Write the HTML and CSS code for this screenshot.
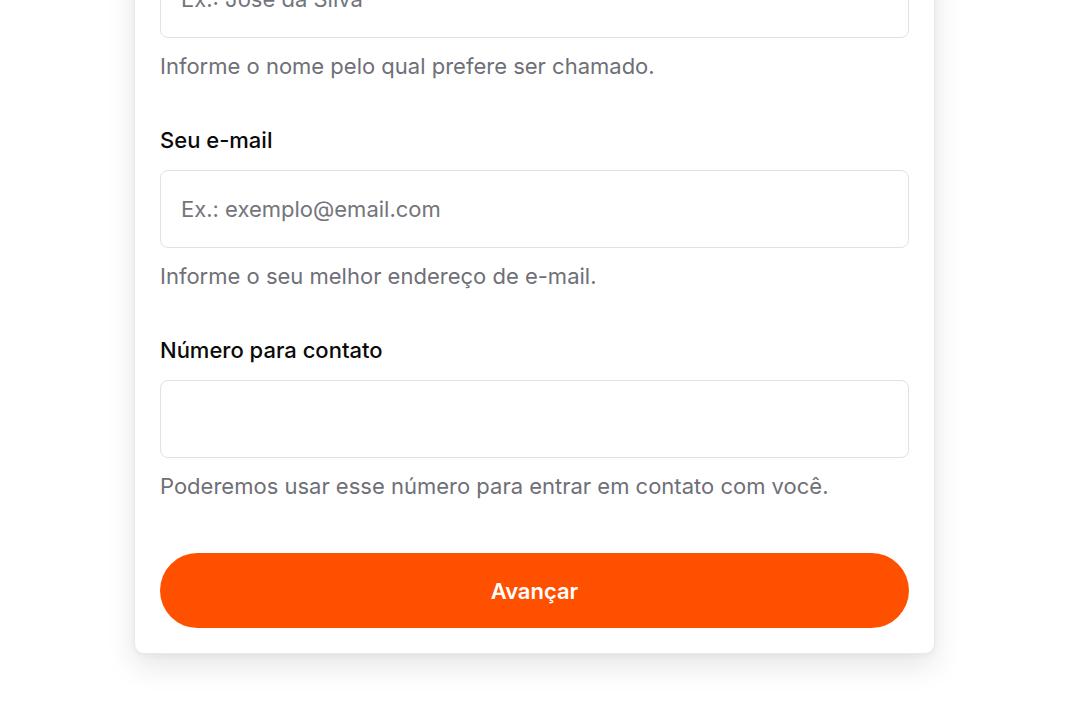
FILE: index.html
```html
<!DOCTYPE html>
<html lang="pt-BR">
<head>
<meta charset="utf-8">
<title>Cadastro</title>
<link rel="stylesheet" href="styles.css">
</head>
<body>
<main class="page">
  <form class="card">
    <div class="field">
      <label class="label" for="nome">Como quer ser chamado?</label>
      <input class="input" id="nome" type="text" placeholder="Ex.: José da Silva">
      <p class="hint">Informe o nome pelo qual prefere ser chamado.</p>
    </div>
    <div class="field">
      <label class="label" for="email">Seu e-mail</label>
      <input class="input" id="email" type="email" placeholder="Ex.: exemplo@email.com">
      <p class="hint">Informe o seu melhor endereço de e-mail.</p>
    </div>
    <div class="field">
      <label class="label" for="tel">Número para contato</label>
      <input class="input" id="tel" type="tel">
      <p class="hint">Poderemos usar esse número para entrar em contato com você.</p>
    </div>
    <button class="btn" type="button">Avançar</button>
  </form>
</main>
</body>
</html>
```
FILE: styles.css
```css
* { box-sizing: border-box; }
html, body { margin: 0; padding: 0; background: #ffffff; }
body {
  font-family: Inter, "Noto Sans", "Liberation Sans", sans-serif;
  height: 715px;
  overflow: hidden;
}
.page {
  display: flex;
  padding: 0 0 60px 134px;
  transform: translateY(-109px);
}
.card {
  width: 801px;
  background: #fff;
  border: 1px solid #e9e9e9;
  border-radius: 10px;
  box-shadow: 0 12px 30px rgba(0, 0, 0, 0.1), 0 2px 6px rgba(0, 0, 0, 0.04);
  padding: 24px 25px 25px;
  display: flex;
  flex-direction: column;
  gap: 46px;
}
.field {
  display: flex;
  flex-direction: column;
}
.label {
  font-size: 22px;
  line-height: 28px;
  font-weight: 500;
  color: #0a0a0a;
  margin-bottom: 16px;
}
.input {
  height: 78px;
  border: 1px solid #e2e2e2;
  border-radius: 8px;
  padding: 0 20px;
  font-family: inherit;
  font-size: 22px;
  color: #111;
  background: #fff;
  outline: none;
}
.input::placeholder { color: #74747c; }
.hint {
  margin: 14px 0 0;
  font-size: 22px;
  line-height: 28px;
  color: #6f6f78;
}
.btn {
  margin-top: 7px;
  height: 75px;
  border: none;
  border-radius: 38px;
  background: #ff5000;
  color: #fff;
  font-family: inherit;
  font-size: 22px;
  font-weight: 600;
  cursor: pointer;
}
```
